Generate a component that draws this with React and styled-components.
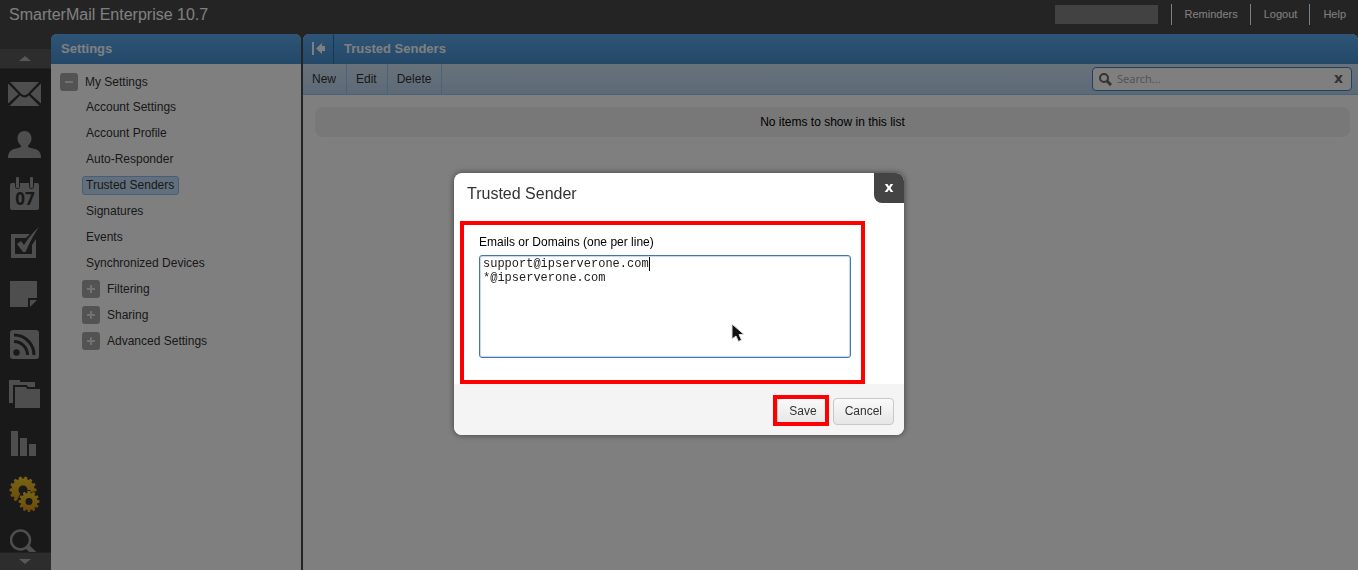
import React from "react";
import styled, { createGlobalStyle, css } from "styled-components";

const GlobalStyle = createGlobalStyle`
  *, *::before, *::after { box-sizing: border-box; }
  body {
    margin: 0;
    background: #484848;
    font-family: "Liberation Sans", Arial, Helvetica, sans-serif;
    font-size: 12px;
    line-height: 16px;
    color: #333;
  }
  h1, h2, p, ul { margin: 0; padding: 0; }
  ul { list-style: none; }
  button, input, textarea { font: inherit; color: inherit; }
  a { color: inherit; text-decoration: none; }
`;

const Shell = styled.div`
  display: flex;
  flex-direction: column;
  height: 100vh;
  overflow: hidden;
`;

const TopBar = styled.header`
  display: flex;
  flex: none;
  align-items: flex-start;
  justify-content: space-between;
  height: 34px;
  padding-left: 9px;
  color: #fff;
`;

const Brand = styled.h1`
  font-size: 16px;
  font-weight: 400;
  line-height: 30px;
`;

const TopNav = styled.nav`
  display: flex;
  align-items: center;
  height: 21px;
  margin-top: 4px;
  font-size: 11px;
`;

const UserName = styled.span`
  width: 103px;
  height: 19px;
  margin-right: 13px;
  background: #848484;
`;

const TopLink = styled.a`
  padding: 0 12px 0 13px;
  border-left: 1px solid #fff;
  line-height: 21px;
`;

const Workspace = styled.div`
  display: flex;
  flex: 1;
  min-height: 0;
`;

const Rail = styled.nav`
  display: flex;
  flex: none;
  flex-direction: column;
  width: 51px;
  padding-top: 15px;
`;

const RailScroll = styled.button`
  display: flex;
  flex: none;
  align-items: center;
  justify-content: center;
  height: ${(p) => (p.$end ? 18 : 20)}px;
  padding: 0 2px 0 0;
  border: 0;
  border-${(p) => (p.$end ? "top" : "bottom")}: 1px solid #444;
  background: #5a5a5a;
`;

const RailList = styled.ul`
  flex: 1;
  min-height: 0;
  overflow: hidden;
  background: #323232;
`;

const RailLink = styled.a`
  display: flex;
  align-items: center;
  justify-content: center;
  height: 50px;
  padding-right: 2px;
  color: #9c9c9c;
`;

const Panel = styled.section`
  display: flex;
  flex-direction: column;
  overflow: hidden;
  border-radius: 6px 6px 0 0;
  background: #fff;
`;

const SettingsPanel = styled(Panel)`
  flex: none;
  width: 250px;
  margin-right: 2px;
`;

const MainPanel = styled(Panel)`
  flex: 1;
  min-width: 0;
`;

const PanelHeader = styled.header`
  display: flex;
  flex: none;
  align-items: center;
  height: 30px;
  background: linear-gradient(#5ca8ee, #4890d0);
  color: #fff;
`;

const PanelTitle = styled.h2`
  padding-left: 10px;
  font-size: 13px;
  font-weight: 700;
`;

const CollapseButton = styled.button`
  display: flex;
  align-items: center;
  justify-content: center;
  width: 31px;
  height: 30px;
  padding: 0 0 1px;
  border: 0;
  border-right: 1px solid #2f6ea8;
  background: none;
`;

const Tree = styled.ul`
  padding: 6px 9px;
`;

const Branch = styled.ul`
  padding-left: 22px;
`;

const TreeRow = styled.div`
  display: flex;
  align-items: center;
  gap: 7px;
  height: ${(p) => (p.$root ? 24 : 26)}px;
`;

const Toggle = styled.button`
  display: flex;
  align-items: center;
  justify-content: center;
  width: 18px;
  height: 18px;
  padding: 0;
  border: 0;
  border-radius: 3px;
  background: #a6a6a6;
`;

const TreeLink = styled.a`
  padding: ${(p) => (p.$leaf ? "0 4px 1px 3px" : "0 0 1px")};
  border: ${(p) => (p.$leaf ? 1 : 0)}px solid transparent;
  border-radius: 3px;
  ${(p) =>
    p.$selected &&
    css`
      border-color: #8cbcf0;
      background: #c4def8;
    `}
`;

const Toolbar = styled.div`
  display: flex;
  flex: none;
  align-items: stretch;
  height: 31px;
  padding-right: 6px;
  border-bottom: 1px solid #98c4f0;
  background: linear-gradient(#d2e4f4, #b8d4f0);
`;

const ToolButton = styled.button`
  padding: 0 10px 1px 9px;
  border: 0;
  border-right: 1px solid #98c4f0;
  background: none;
`;

const SearchBox = styled.label`
  display: flex;
  align-items: center;
  align-self: center;
  gap: 5px;
  width: 260px;
  height: 24px;
  margin-left: auto;
  padding: 0 8px 0 6px;
  border: 1px solid #3c84c0;
  border-radius: 4px;
  background: #fff;
`;

const SearchInput = styled.input`
  flex: 1;
  min-width: 0;
  padding: 0;
  border: 0;
  outline: 0;
  background: none;
  font-family: "Noto Sans", "Open Sans", sans-serif;
  font-size: 11px;
  &::placeholder { color: #a8a8a8; opacity: 1; }
`;

const CrossButton = styled.button`
  padding: 0 0 2px;
  border: 0;
  background: none;
  font-family: "DejaVu Sans", sans-serif;
  font-size: 14px;
  font-weight: 700;
`;

const ClearButton = styled(CrossButton)`
  color: #666;
`;

const EmptyMessage = styled.p`
  margin: 12px 8px 0 12px;
  border-radius: 8px;
  background: #f0f0f0;
  color: #000;
  line-height: 30px;
  text-align: center;
`;

const Backdrop = styled.div`
  position: fixed;
  inset: 0;
  display: flex;
  align-items: center;
  justify-content: center;
  padding-top: 38px;
  background: rgba(0, 0, 0, 0.5);
`;

const Dialog = styled.form`
  position: relative;
  width: 450px;
  border-radius: 8px;
  background: #fff;
  box-shadow: 0 0 6px rgba(0, 0, 0, 0.5);
`;

const DialogHeader = styled.header`
  display: flex;
  align-items: flex-start;
  justify-content: space-between;
  height: 48px;
  padding-left: 13px;
`;

const DialogTitle = styled.h2`
  font-size: 16px;
  font-weight: 400;
  line-height: 42px;
`;

const CloseButton = styled(CrossButton)`
  width: 30px;
  height: 30px;
  border-radius: 0 8px 0 8px;
  background: #444;
  color: #fff;
`;

const Marked = styled.div`
  position: relative;
  &::after {
    content: "";
    position: absolute;
    inset: ${(p) => p.$inset};
    border: 4px solid #f00;
    pointer-events: none;
  }
`;

const Field = styled(Marked)`
  display: flex;
  flex-direction: column;
  width: 405px;
  height: 163px;
  margin-left: 6px;
  padding: 13px 14px 0 19px;
`;

const FieldLabel = styled.label`
  color: #000;
  line-height: 16px;
`;

const SenderList = styled.textarea`
  height: 103px;
  margin-top: 5px;
  padding: 1px 3px;
  border: 1px solid #4674a8;
  border-radius: 3px;
  outline: 0;
  box-shadow: inset 0 0 1px 1px #c4d6ea;
  color: #222;
  font-family: "Liberation Mono", monospace;
  font-size: 12px;
  line-height: 14px;
  resize: none;
`;

const Caret = styled.span`
  position: absolute;
  top: 36px;
  left: 189px;
  width: 1px;
  height: 14px;
  background: #000;
`;

const Pointer = styled.svg`
  position: absolute;
  top: 102px;
  left: 271px;
`;

const DialogFooter = styled.footer`
  display: flex;
  justify-content: flex-end;
  gap: 4px;
  padding: 14px 10px 10px;
  border-radius: 0 0 8px 8px;
  background: #f4f4f4;
`;

const FormButton = styled.button`
  display: block;
  height: 27px;
  padding: 0 11px 2px;
  border: 1px solid #c8c8c8;
  border-radius: 4px;
  background: linear-gradient(#fafafa, #e6e6e6);
`;

const Triangle = ({ down }) => (
  <svg width="12" height="5" viewBox="0 0 12 5" aria-hidden="true">
    <path d={down ? "M0 0h12L6 5z" : "M0 5h12L6 0z"} fill="#b0b0b0" />
  </svg>
);

const gearPath = (cx, cy, r, teeth) => {
  const pts = [];
  const step = (Math.PI * 2) / teeth;
  for (let i = 0; i < teeth; i++) {
    [[-0.32, r - 2], [-0.22, r], [0.22, r], [0.32, r - 2]].forEach(([o, rad]) => {
      const a = (i + o) * step;
      pts.push(`${(cx + rad * Math.cos(a)).toFixed(2)} ${(cy + rad * Math.sin(a)).toFixed(2)}`);
    });
  }
  return `M${pts.join("L")}Z`;
};

const railIcons = [
  {
    name: "Email",
    art: (
      <svg width="33" height="24" viewBox="0 0 33 24" fill="currentColor">
        <path d="M2 0h29L20 11.500q-3.500 3.500-7 0z" />
        <path d="M0 1.500 10.500 12 0 21.500zM33 1.500 22.500 12 33 21.500z" />
        <path d="M1.500 24 12 13.500q4.500 4 9 0L31.500 24z" />
      </svg>
    ),
  },
  {
    name: "Contacts",
    art: (
      <svg width="33" height="27" viewBox="0 0 33 27" fill="currentColor">
        <path d="M16.500 0c4 0 7 3 7 7.500 0 3-1.500 5.500-3.500 7v1c1 1.500 4 1.500 7 2.500 4 1.500 6 3.500 6 9H0c0-5.500 2-7.500 6-9 3-1 6-1 7-2.500v-1c-2-1.500-3.500-4-3.500-7C9.500 3 12.500 0 16.500 0z" />
      </svg>
    ),
  },
  {
    name: "Calendar",
    art: (
      <svg width="29" height="34" viewBox="0 0 29 34" fill="currentColor">
        <path d="M2 6h3v3c0 4 5 4 5 0V6h9v3c0 4 5 4 5 0V6h3q2 0 2 2v23q0 2-2 2H2q-2 0-2-2V8q0-2 2-2z" />
        <rect x="6" y="0" width="3" height="11" rx="1" />
        <rect x="20" y="0" width="3" height="11" rx="1" />
        <text x="15" y="28" textAnchor="middle" fill="#323232" fontFamily="Open Sans, sans-serif" fontWeight="700" fontSize="17">
          07
        </text>
      </svg>
    ),
  },
  {
    name: "Tasks",
    art: (
      <svg width="29" height="34" viewBox="0 0 29 34" fill="currentColor">
        <path d="M1 7h19l-4 4H5v16h17V18l4-6v19H1z" />
        <path d="M7 17l4-3 3 4Q20 8 29 0 22 10 15.500 25H13z" />
      </svg>
    ),
  },
  {
    name: "Notes",
    art: (
      <svg width="29" height="26" viewBox="0 0 29 26" fill="currentColor">
        <path d="M0 0h27v17h-9v9H0z" />
        <path d="M20 19h7l-7 7z" />
      </svg>
    ),
  },
  {
    name: "RSS Feeds",
    art: (
      <svg width="29" height="29" viewBox="0 0 29 29">
        <rect width="29" height="29" rx="3" fill="currentColor" />
        <circle cx="6.500" cy="22.500" r="3.200" fill="#323232" />
        <path d="M4 11.500A13.500 13.500 0 0 1 17.500 25M4 5a20 20 0 0 1 20 20" fill="none" stroke="#323232" strokeWidth="3" />
      </svg>
    ),
  },
  {
    name: "File Storage",
    art: (
      <svg width="31" height="28" viewBox="0 0 31 28" fill="currentColor">
        <path d="M0 0h11v2h15v5h-7l-1-2H4v18H0z" />
        <path d="M6 7h11l1 2h13v19H6z" />
      </svg>
    ),
  },
  {
    name: "Reports",
    art: (
      <svg width="29" height="27" viewBox="0 0 29 27" fill="currentColor">
        <path d="M1 0h7v25H1zM10 7h7v18h-7zM19 13h7v12h-7z" />
      </svg>
    ),
  },
  {
    name: "Settings",
    art: (
      <svg width="31" height="36" viewBox="0 0 31 36">
        <defs>
          <linearGradient id="gold" x1="0" y1="0" x2="0" y2="1">
            <stop offset="0" stopColor="#f0cc28" />
            <stop offset="1" stopColor="#d89018" />
          </linearGradient>
        </defs>
        <path d={gearPath(14, 14, 13.5, 14)} fill="url(#gold)" />
        <circle cx="14" cy="14" r="4.500" fill="#323232" />
        <path d="M6 28 12 17l5 3-4 7z" fill="#323232" />
        <path d={gearPath(20, 25.5, 11.5, 12)} fill="#323232" />
        <path d={gearPath(20, 25.5, 10.5, 12)} fill="url(#gold)" />
        <circle cx="20" cy="25.500" r="3.500" fill="#323232" />
      </svg>
    ),
  },
  {
    name: "Search",
    art: (
      <svg width="29" height="30" viewBox="0 0 29 30" fill="none" stroke="currentColor">
        <circle cx="10.500" cy="11" r="9.500" strokeWidth="2.500" />
        <path d="M17 17.500 28 28" strokeWidth="5" />
      </svg>
    ),
  },
];

const leaves = [
  "Account Settings",
  "Account Profile",
  "Auto-Responder",
  "Trusted Senders",
  "Signatures",
  "Events",
  "Synchronized Devices",
];

const groups = ["Filtering", "Sharing", "Advanced Settings"];

const ToggleIcon = ({ open }) => (
  <svg width="8" height="8" viewBox="0 0 8 8" aria-hidden="true">
    <path d={open ? "M0 3h8v2H0z" : "M0 3h3V0h2v3h3v2H5v3H3V5H0z"} fill="#e4e4e4" />
  </svg>
);

export default function App() {
  return (
    <>
      <GlobalStyle />
      <Shell>
        <TopBar>
          <Brand>SmarterMail Enterprise 10.7</Brand>
          <TopNav aria-label="Account">
            <UserName />
            <TopLink href="#reminders">Reminders</TopLink>
            <TopLink href="#logout">Logout</TopLink>
            <TopLink href="#help">Help</TopLink>
          </TopNav>
        </TopBar>
        <Workspace>
          <Rail aria-label="Sections">
            <RailScroll type="button" aria-label="Scroll up">
              <Triangle />
            </RailScroll>
            <RailList>
              {railIcons.map(({ name, art }) => (
                <li key={name}>
                  <RailLink href="#section" aria-label={name}>{art}</RailLink>
                </li>
              ))}
            </RailList>
            <RailScroll type="button" aria-label="Scroll down" $end>
              <Triangle down />
            </RailScroll>
          </Rail>
          <SettingsPanel>
            <PanelHeader>
              <PanelTitle>Settings</PanelTitle>
            </PanelHeader>
            <Tree>
              <li>
                <TreeRow $root>
                  <Toggle type="button" aria-label="Collapse My Settings">
                    <ToggleIcon open />
                  </Toggle>
                  <TreeLink href="#my-settings">My Settings</TreeLink>
                </TreeRow>
                <Branch>
                  {leaves.map((name) => (
                    <li key={name}>
                      <TreeRow>
                        <TreeLink href="#setting" $leaf $selected={name === "Trusted Senders"}>
                          {name}
                        </TreeLink>
                      </TreeRow>
                    </li>
                  ))}
                  {groups.map((name) => (
                    <li key={name}>
                      <TreeRow>
                        <Toggle type="button" aria-label={`Expand ${name}`}>
                          <ToggleIcon />
                        </Toggle>
                        <TreeLink href="#group">{name}</TreeLink>
                      </TreeRow>
                    </li>
                  ))}
                </Branch>
              </li>
            </Tree>
          </SettingsPanel>
          <MainPanel>
            <PanelHeader>
              <CollapseButton type="button" aria-label="Collapse sidebar">
                <svg width="13" height="13" viewBox="0 0 13 13" fill="#fff">
                  <path d="M0 0h2v13H0zM4 6.500 10 1v3h3v5h-3v3z" />
                </svg>
              </CollapseButton>
              <PanelTitle>Trusted Senders</PanelTitle>
            </PanelHeader>
            <Toolbar>
              <ToolButton type="button">New</ToolButton>
              <ToolButton type="button">Edit</ToolButton>
              <ToolButton type="button">Delete</ToolButton>
              <SearchBox>
                <svg width="13" height="13" viewBox="0 0 13 13" fill="none" stroke="#666" aria-hidden="true">
                  <circle cx="5" cy="5" r="4" strokeWidth="2" />
                  <path d="M8 8l4 4" strokeWidth="3" />
                </svg>
                <SearchInput type="text" placeholder="Search..." aria-label="Search" />
                <ClearButton type="button" aria-label="Clear search">x</ClearButton>
              </SearchBox>
            </Toolbar>
            <EmptyMessage>No items to show in this list</EmptyMessage>
          </MainPanel>
        </Workspace>
      </Shell>
      <Backdrop>
        <Dialog role="dialog" aria-labelledby="dialog-title" onSubmit={(e) => e.preventDefault()}>
          <DialogHeader>
            <DialogTitle id="dialog-title">Trusted Sender</DialogTitle>
            <CloseButton type="button" aria-label="Close">x</CloseButton>
          </DialogHeader>
          <Field $inset="0">
            <FieldLabel htmlFor="senders">Emails or Domains (one per line)</FieldLabel>
            <SenderList id="senders" spellCheck={false} defaultValue={"support@ipserverone.com\n*@ipserverone.com"} />
            <Caret />
            <Pointer width="14" height="20" viewBox="0 0 14 20" aria-hidden="true">
              <path d="M1 1v15l4-3 2.500 5.500 3-1.500L8 11.500h5z" fill="#111" stroke="#ddd" strokeWidth="1" />
            </Pointer>
          </Field>
          <DialogFooter>
            <Marked $inset="-3px 0 -1px -4px">
              <FormButton type="submit">Save</FormButton>
            </Marked>
            <FormButton type="button">Cancel</FormButton>
          </DialogFooter>
        </Dialog>
      </Backdrop>
    </>
  );
}
